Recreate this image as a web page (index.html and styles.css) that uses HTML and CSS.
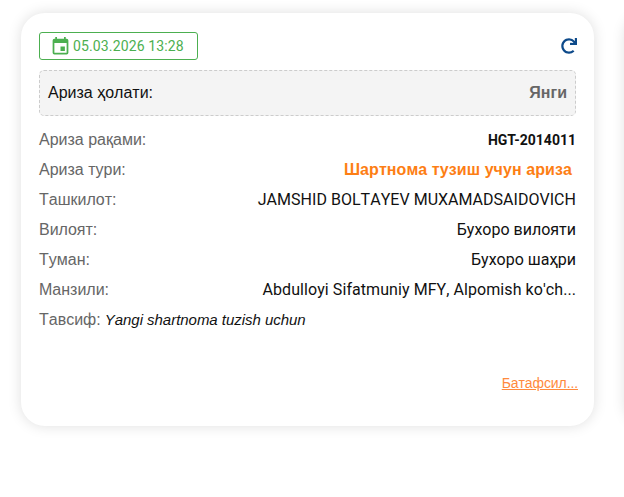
FILE: index.html
```html
<!DOCTYPE html>
<html lang="uz">
<head>
<meta charset="utf-8">
<title>Ариза</title>
<link rel="stylesheet" href="styles.css">
</head>
<body>
<main class="cards">
  <article class="card">
    <div class="top">
      <div class="date">
        <svg class="cal" viewBox="0 0 24 24" width="21" height="21"><path fill="#4caf50" d="M19 3h-1V1h-2v2H8V1H6v2H5a2 2 0 0 0-2 2v14a2 2 0 0 0 2 2h14a2 2 0 0 0 2-2V5a2 2 0 0 0-2-2zm0 16H5V8h14v11zM12 12v5h5v-5h-5z" /></svg>
        <span>05.03.2026 13:28</span>
      </div>
      <svg class="refresh" viewBox="0 0 512 512" width="16" height="16"><path fill="#0d4a8a" d="M500.33 0h-47.41a12 12 0 0 0-12 12.57l4 82.76A247.42 247.42 0 0 0 256 8C119.34 8 7.9 119.53 8 256.19 8.1 393.07 119.1 504 256 504a247.1 247.1 0 0 0 166.18-63.91 12 12 0 0 0 .48-17.43l-34-34a12 12 0 0 0-16.38-.55A176 176 0 1 1 402.1 157.8l-101.53-4.87a12 12 0 0 0-12.57 12v47.41a12 12 0 0 0 12 12h200.33a12 12 0 0 0 12-12V12a12 12 0 0 0-12-12z"/></svg>
    </div>
    <div class="status"><span>Ариза ҳолати:</span><b>Янги</b></div>
    <dl class="rows">
      <div class="row"><dt>Ариза рақами:</dt><dd class="num">HGT-2014011</dd></div>
      <div class="row"><dt>Ариза тури:</dt><dd class="type">Шартнома тузиш учун ариза</dd></div>
      <div class="row"><dt>Ташкилот:</dt><dd class="org">JAMSHID BOLTAYEV MUXAMADSAIDOVICH</dd></div>
      <div class="row"><dt>Вилоят:</dt><dd>Бухоро вилояти</dd></div>
      <div class="row"><dt>Туман:</dt><dd>Бухоро шаҳри</dd></div>
      <div class="row"><dt>Манзили:</dt><dd class="addr">Abdulloyi Sifatmuniy MFY, Alpomish ko'ch...</dd></div>
      <div class="row desc"><dt>Тавсиф:</dt><dd><i>Yangi shartnoma tuzish uchun</i></dd></div>
    </dl>
    <div class="more"><a href="#">Батафсил...</a></div>
  </article>
  <article class="card next"></article>
</main>
</body>
</html>
```
FILE: styles.css
```css
html, body { margin: 0; height: 100%; background: #fff; overflow: hidden; }
body { font-family: Roboto, "Liberation Sans", sans-serif; font-size: 16px; color: #111; font-kerning: none; }
.cards { display: flex; gap: 31px; padding: 13px 0 0 21px; width: 1300px; }
.card {
  box-sizing: border-box; width: 573px; height: 413px; flex: none;
  padding: 19px 18px 0; background: #fff; border-radius: 24px;
  box-shadow: 0 0 14px rgba(0,0,0,.13);
}
.top { display: flex; justify-content: space-between; align-items: center; }
.date {
  box-sizing: border-box; width: 159px; height: 28px; display: flex; align-items: center; gap: 2px;
  padding-left: 10px; border: 1px solid #4caf50; border-radius: 3px;
  color: #4caf50; font-size: 14px; letter-spacing: .13px;
}
.refresh { margin-right: -1px; }
.status {
  box-sizing: border-box; height: 46px; margin-top: 10px; padding: 0 8px;
  display: flex; justify-content: space-between; align-items: center;
  background: #f4f4f4; border: 1px dashed #ccc; border-radius: 5px;
  font-family: "Liberation Sans", sans-serif;
}
.status b { color: #666; }
.rows { margin: 9px 0 0; }
.row { display: flex; justify-content: space-between; height: 30px; line-height: 30px; align-items: baseline; }
.row dt { color: #666; font-family: "Liberation Sans", sans-serif; }
.row dd { margin: 0; }
.org { letter-spacing: .03px; }
.addr { letter-spacing: .07px; }
.num { font-size: 14px; font-weight: 700; font-kerning: normal; }
.type { color: #fd7e14; font-weight: 700; padding-right: 4px; font-family: "Liberation Sans", sans-serif; letter-spacing: .08px; }
.desc { justify-content: flex-start; gap: 4px; }
.desc dd { font-size: 15px; font-family: "Liberation Sans", sans-serif; letter-spacing: -.03px; }
.more { margin-top: 40px; text-align: right; font-size: 14px; font-family: "Liberation Sans", sans-serif; letter-spacing: -.1px; }
.more a { color: #ff8a3d; margin-right: -2px; }
```
